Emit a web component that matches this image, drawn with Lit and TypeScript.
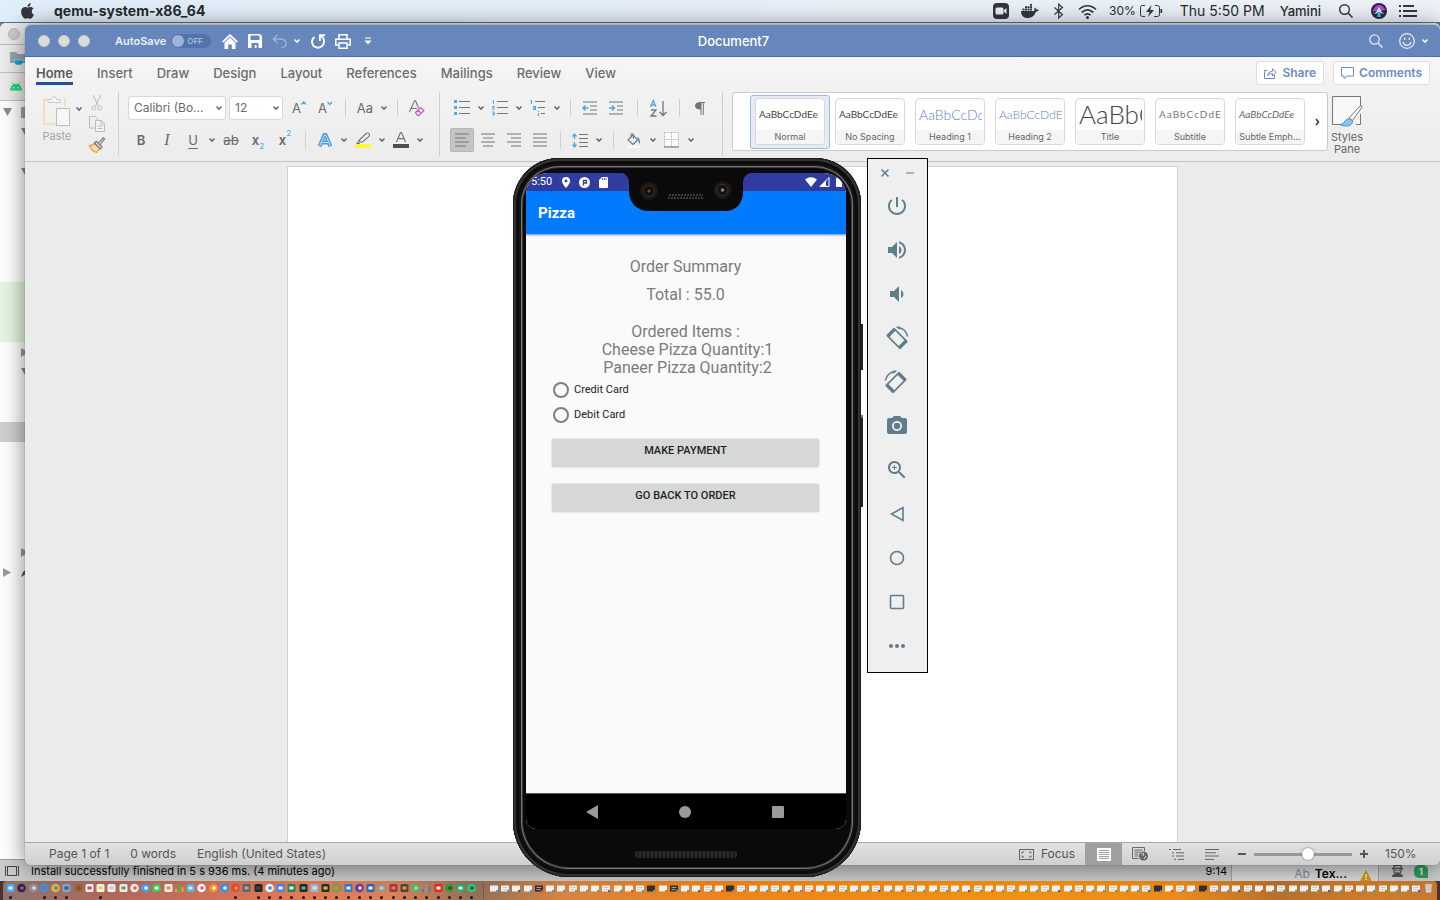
import { LitElement, html, css, svg } from "lit";
import { customElement } from "lit/decorators.js";
import { classMap } from "lit/directives/class-map.js";

const base = css`
  :host, * { box-sizing: border-box; }
  button, select, input { font: inherit; color: inherit; margin: 0; }
  button { background: none; border: 0; padding: 0; display: inline-flex; align-items: center; justify-content: center; }
  svg { display: block; flex: none; overflow: visible; }
`;

const icon = (w: number, h: number, body: unknown, vb = `0 0 ${w} ${h}`) =>
  html`<svg width=${w} height=${h} viewBox=${vb} fill="none" aria-hidden="true">${body}</svg>`;

const chev = (c = "#6a6a6a") =>
  icon(8, 6, svg`<path d="M1.5 1.5 4 4 6.5 1.5" stroke=${c} stroke-width="1.6"/>`);

/* ------------------------------------------------------------------ */
@customElement("mac-menubar")
class MacMenubar extends LitElement {
  static styles = [base, css`
    :host { display: flex; align-items: center; height: 23px; padding: 0 23px 0 21px; gap: 12px;
      background: linear-gradient(90deg, #e0eef9, #e8f0f8 60%, #eef2f8); border-bottom: 1px solid #55708e;
      font: 500 14px/22px Inter, sans-serif; color: #262a30; }
    .app { font-weight: 700; font-size: 14px; margin-left: 8px; }
    .fill { flex: 1; }
    .near { margin-right: 3px; }
    .roomy { margin-right: 6px; }
    .small { font-size: 12px; font-weight: 400; }
    .battery { display: flex; align-items: center; gap: 4px; margin-right: 5px; }
    .name { font-weight: 500; font-size: 13px; }
    .date { font-weight: 400; font-size: 14px; }
  `];
  render() {
    return html`
      ${icon(13, 16, svg`<path fill="#33373d" d="M12.152 6.896c-.948 0-2.415-1.078-3.96-1.04-2.04.027-3.91 1.183-4.961 3.014-2.117 3.675-.546 9.103 1.519 12.09 1.013 1.454 2.208 3.09 3.792 3.039 1.52-.065 2.09-.987 3.935-.987 1.831 0 2.35.987 3.96.948 1.637-.026 2.676-1.48 3.676-2.948 1.156-1.688 1.636-3.325 1.662-3.415-.039-.013-3.182-1.221-3.22-4.857-.026-3.04 2.48-4.494 2.597-4.559-1.429-2.09-3.623-2.324-4.39-2.376-2-.156-3.675 1.09-4.61 1.09zM15.53 3.83c.843-1.012 1.4-2.427 1.245-3.83-1.207.052-2.662.805-3.532 1.818-.78.896-1.454 2.338-1.273 3.714 1.338.104 2.715-.688 3.559-1.701"/>`, "2 0 20 24")}
      <span class="app">qemu-system-x86_64</span>
      <span class="fill"></span>
      ${icon(16, 16, svg`<rect width="16" height="16" rx="4" fill="#33373d"/><rect x="2.500" y="4.500" width="8" height="7" rx="1.500" fill="#e8f0f8"/><path d="M11 7.200 13.500 5v6L11 8.800z" fill="#e8f0f8"/>`)}
      <span class="near">${icon(18, 14, svg`<path fill="#33373d" d="M0 7h12.800c.8-.4 1-1.600.5-2.700l.8-.8c.8.5 1.200 1.200 1.200 2 .9-.1 1.800 0 2.500.5-.5 1-1.500 1.500-2.800 1.500C13.500 12 10.500 14 6.500 14 2.500 14 0 11.500 0 7zM1.500 4.500h2v2h-2zM4 4.500h2v2H4zM6.500 4.500h2v2h-2zM9 4.500h2v2H9zM4 2.200h2v1.800H4zM6.500 2.200h2v1.800h-2zM9 2.200h2v1.800H9zM9 0h2v1.700H9z"/>`)}</span>
      <span class="near">${icon(9, 16, svg`<path d="M.5 4.500 8.500 11.500 4.700 15V1l3.800 3.500-8 7" stroke="#33373d" stroke-width="1.200"/>`)}</span>
      ${icon(19, 15, svg`<path d="M1 5.500c5-5 12-5 17 0M3.700 8.500c3.600-3.300 8-3.300 11.600 0M6.400 11.200c2-1.800 4.200-1.800 6.200 0" stroke="#33373d" stroke-width="1.700"/><circle cx="9.500" cy="13.500" r="1.500" fill="#33373d"/>`)}
      <span class="battery"><span class="small">30%</span>
      ${icon(23, 12, svg`<path d="M5 .5H2.500Q.5.5.5 2.500v7q0 2 2 2H5M15 .5h2.500q2 0 2 2v7q0 2-2 2H14" stroke="#33373d"/><path d="M11.500 0 6 7h3.500L8 12l6-7h-3.700z" fill="#33373d"/><path d="M21 4q2 2 0 4z" fill="#33373d" stroke="#33373d"/>`)}</span>
      <span class="date near">Thu 5:50 PM</span>
      <span class="name roomy">Yamini</span>
      <span class="roomy">${icon(14, 14, svg`<circle cx="5.500" cy="5.500" r="4.800" stroke="#33373d" stroke-width="1.400"/><path d="m9 9 4.500 4.500" stroke="#33373d" stroke-width="1.600"/>`)}</span>
      ${icon(16, 16, svg`<circle cx="8" cy="8" r="8" fill="#2b2540"/><path d="M1.500 9C3 3 6 2 8 2c3 0 5 2 6.500 5-3 0-4 1-6.500 2-2-1-4-1-6.500 0z" fill="#b04bd0"/><path d="M2.500 11C5 10 6 8 8 4c2 4 3 6 5.500 7-2 0-3-1-5.500-2-2 1-3.500 2-5.500 2z" fill="#d8f4ff"/><path d="M6 14c0-3 1-5 2-6 1 1 2 3 2 6z" fill="#39b6e8"/>`)}
      ${icon(18, 12, svg`<path d="M0 1h2M0 6h2M0 11h2M4 1h11M4 6h14M4 11h14" stroke="#33373d" stroke-width="2"/>`)}
    `;
  }
}

/* ------------------------------------------------------------------ */
type TreeRow = { arrow?: "down" | "right"; depth?: number; tint?: string; glyph?: string };
const treeRows: TreeRow[] = Array.from({ length: 37 }, (_, i): TreeRow => {
  const marks: Record<number, TreeRow> = {
    0: { arrow: "down", depth: 0, glyph: "folder" }, 1: { arrow: "down", depth: 1 }, 3: { arrow: "down", depth: 1 },
    9: { tint: "green" }, 10: { tint: "green" }, 11: { tint: "green" },
    12: { arrow: "right", depth: 1 }, 13: { arrow: "down", depth: 1 }, 16: { tint: "gray" },
    22: { arrow: "right", depth: 1 }, 23: { arrow: "right", depth: 0, glyph: "pen" },
  };
  return marks[i] ?? {};
});

@customElement("studio-window")
class StudioWindow extends LitElement {
  static styles = [base, css`
    :host { display: flex; flex-direction: column; background: #fff; border-radius: 6px 6px 0 0; overflow: hidden;
      font: 400 11px/16px Inter, sans-serif; color: #000; }
    .title { height: 22px; background: #ececec; border-bottom: 1px solid #bbb; display: flex; align-items: center; padding-left: 8px; }
    .dot { width: 12px; height: 12px; border-radius: 50%; background: #cdcdcd; border: 1px solid #b9b9b9; }
    .bar { height: 28px; background: #ececec; border-bottom: 1px solid #c0c0c0; display: flex; align-items: center; padding-left: 10px; }
    .tree { flex: 1; min-height: 0; overflow: hidden; padding-top: 1px; }
    .row { height: 20px; display: flex; align-items: center; padding-left: 3px; gap: 9px; }
    .deep { padding-left: 21px; }
    .green { background: #e7f6e1; }
    .gray { background: #d0d0d0; }
    .status { height: 22px; flex: none; border-top: 1px solid #a0a0a0; background: #cccccc; display: flex; align-items: center; padding: 1px 12px 0 5px; gap: 12px; }
    .msg { flex: 1; }
    .panel { align-self: stretch; width: 148px; border: 1px solid #a5a5a5; border-top: 0; border-bottom: 0; background: #dcdcdc;
      display: flex; align-items: flex-end; justify-content: flex-end; padding-right: 6px; gap: 5px; font-size: 12px; line-height: 14px; overflow: hidden; margin: -1px 0 0 -8px; }
    .ab { color: #7f8c99; }
    .tex { font-weight: 600; margin-right: 8px; }
    .badge { width: 14px; height: 13px; border-radius: 5px 5px 0 5px; background: #2f9e5b; color: #fff; font-weight: 600; font-size: 9px; line-height: 13px; text-align: center; }
    .end { display: flex; align-items: center; gap: 10px; }
  `];
  render() {
    return html`
      <div class="title"><span class="dot"></span></div>
      <div class="bar">${icon(16, 15, svg`<path d="M0 1h6l2 2h8v9H0z" fill="#98a6b0"/><path d="M4 9h9v1h3v2h-3q-1 2-3 2H7q-3 0-3-5z" fill="#12a8d8" stroke="#ececec" stroke-width=".5"/>`)}</div>
      <div class="bar">${icon(12, 9, svg`<path d="M0 8.500Q.5 4 3 2.600L1.800.6l.7-.4L3.700 2.200q2.300-.8 4.600 0L9.500.2l.7.4L9 2.600Q11.500 4 12 8.500z" fill="#1ed582"/><circle cx="3.500" cy="5.700" r=".7" fill="#fff"/><circle cx="8.500" cy="5.700" r=".7" fill="#fff"/>`)}</div>
      <div class="tree">
        ${treeRows.map((r) => html`<div class=${classMap({ row: true, deep: r.depth === 1, green: r.tint === "green", gray: r.tint === "gray" })}>
          ${r.arrow === "down" ? icon(9, 8, svg`<path d="M0 0h9L4.500 8z" fill="#8c8c8c"/>`) : ""}
          ${r.arrow === "right" ? icon(8, 9, svg`<path d="M0 0v9L8 4.500z" fill="#9a9a9a"/>`) : ""}
          ${r.glyph === "folder" ? icon(12, 11, svg`<path d="M0 0h12v11H0z" fill="#98a6b0"/>`) : ""}
          ${r.glyph === "pen" ? icon(12, 10, svg`<path d="M1 10 3 5l6-5 3 3V7H6z" fill="#555"/>`) : ""}
        </div>`)}
      </div>
      <div class="status">
        ${icon(14, 10, svg`<path d="M.5 0v10M13.500 0v10" stroke="#444"/><rect x="2.500" y=".5" width="9" height="9" stroke="#444"/>`)}
        <span class="msg">Install successfully finished in 5 s 936 ms. (4 minutes ago)</span>
        <span>9:14</span>
        <span class="panel"><span class="ab">Ab</span><span class="tex">Tex...</span>${icon(12, 11, svg`<path d="M6 0 12 11H0z" fill="#d99a1c"/><path d="M6 4v4M6 9v1" stroke="#fff" stroke-width="1.300"/>`)}</span>
        <span class="end">${icon(13, 12, svg`<path d="M1 3.500h11M3 3V.5h7V3M3 4v3q3.500 3.500 7 0V4" stroke="#555" stroke-width="1.300"/><path d="M1 12q0-3 3-3.300h5q3 .3 3 3.300z" fill="#555"/><path d="M4.500 5.500H6M7.500 5.500H9M5.500 7.300h2" stroke="#555"/>`)}
        <span class="badge">1</span></span>
      </div>`;
  }
}

/* ------------------------------------------------------------------ */
const g = "#757575";
const b = "#4aabdf";
const lines = (rows: number[][]) => rows.map(([x1, x2, y]) => svg`<path d=${`M${x1} ${y}H${x2}`} stroke=${g} stroke-width="1.200"/>`);

const styleCards = [
  ["Normal", "plain"], ["No Spacing", "plain"], ["Heading 1", "h1"], ["Heading 2", "h2"],
  ["Title", "big"], ["Subtitle", "track"], ["Subtle Emph...", "it"],
];

@customElement("word-window")
class WordWindow extends LitElement {
  static styles = [base, css`
    :host { display: flex; flex-direction: column; border-radius: 6px; overflow: hidden; background: #ebebeb;
      font: 400 12px/16px Inter, sans-serif; color: #6a6a6a; box-shadow: 0 2px 24px rgba(0,0,0,.5), 0 0 1px rgba(0,0,0,.6); }
    .titlebar { height: 32px; flex: none; background: #6786bb; border-bottom: 1px solid #4c6eab; color: #fff;
      display: grid; grid-template-columns: 1fr auto 1fr; align-items: center; padding: 1px 11px 0 13px; }
    .left { display: flex; align-items: center; }
    .lights { display: flex; gap: 8px; margin-right: 25px; }
    .light { width: 12px; height: 12px; border-radius: 50%; background: #dcdcdc; border: 1px solid #c9c9c9; }
    .autosave { display: flex; align-items: center; gap: 5px; font-size: 11px; font-weight: 600; color: #e9eefa; margin-right: 11px; }
    .switch { display: grid; align-items: center; }
    .switch input { appearance: none; grid-area: 1 / 1; width: 40px; height: 14px; border-radius: 7px; background: #5374ab; }
    .switch input::before { content: ""; display: block; width: 12px; height: 12px; margin: 1px; border-radius: 50%; background: #9fb3da; }
    .off { grid-area: 1 / 1; padding-left: 16px; font-size: 8px; line-height: 14px; color: #a9bbdd; z-index: 1; }
    .quick, .undo { display: flex; align-items: center; gap: 10px; }
    .undo { gap: 6px; }
    .doc { font-size: 13px; font-weight: 500; }
    .right { display: flex; align-items: center; justify-content: flex-end; gap: 16px; }
    .face { display: flex; align-items: center; gap: 6px; }

    .tabs { flex: none; height: 31px; background: linear-gradient(#f6f6f6, #f2f2f2); display: flex; align-items: flex-start; padding: 4px 10px 0 11px; }
    .tablist { display: flex; gap: 24px; padding-top: 4px; flex: 1; }
    .tab { font-size: 13px; font-weight: 500; line-height: 16px; padding-bottom: 1px; border-bottom: 3px solid transparent; color: #6c6c6c; }
    .tab.on { font-weight: 600; color: #5a5a5a; border-bottom-color: #2350a0; }
    .pills { display: flex; gap: 9px; }
    .pill { height: 24px; background: #fff; border: 1px solid #dedede; border-radius: 3px; color: #6b8ac4; font-weight: 600; font-size: 12px; padding: 0 7px; gap: 5px; }

    .ribbon { flex: none; background: linear-gradient(#f2f2f2, #ececec); border-bottom: 1px solid #c2c2c2; display: flex; padding: 4px 0 5px 16px; }
    .rule { width: 1px; background: #cfcfcf; margin: 0 9px; flex: none; }
    .group { display: flex; flex-direction: column; flex: none; }
    .line { display: flex; align-items: center; height: 32px; }
    .cell { width: 26px; height: 24px; flex: none; }
    .wide { width: 28px; }
    .arrow { width: 12px; height: 24px; flex: none; }
    .bar { height: 18px; flex: none; width: 14px; display: flex; justify-content: center; }
    .bar.b16 { width: 16px; }
    .bar::before { content: ""; width: 1px; background: #cfcfcf; }
    .pressed { background: #c4c4c4; border: 1px solid #b4b4b4; border-radius: 2px; width: 24px; margin: 0 1px; }
    .clip { display: flex; }
    .paste { flex-direction: column; width: 32px; gap: 2px; color: #a5a5a5; font-size: 11px; line-height: 14px; justify-content: flex-start; padding-top: 4px; }
    .stack { display: flex; flex-direction: column; }
    .stack .cell { height: 21px; width: 24px; }
    .clip .arrow { height: 34px; }
    .combo { display: grid; align-items: center; margin-right: 3px; }
    .combo select { appearance: none; grid-area: 1 / 1; width: 98px; height: 24px; background: #fff; border: 1px solid #d8d8d8; border-radius: 3px; padding: 0 0 0 5px; font-size: 12px; }
    .combo.size select { width: 54px; }
    .combo svg { grid-area: 1 / 1; justify-self: end; margin-right: 3px; pointer-events: none; }
    .ltr { font-size: 13px; line-height: 18px; }
    .sub { font-size: 8px; color: #4aabdf; align-self: flex-end; line-height: 10px; padding-bottom: 1px; }
    .sup { font-size: 8px; color: #4aabdf; align-self: flex-start; line-height: 10px; }
    .bold { font-weight: 600; }
    .ital { font-style: italic; font-family: "Liberation Serif", serif; font-size: 16px; }
    .under { text-decoration: underline; text-underline-offset: 3px; }
    .strike { text-decoration: line-through; font-size: 13px; }

    .gallery { display: flex; align-items: center; height: 59px; background: #fff; border: 1px solid #cbcbcb; border-radius: 3px; padding: 0 3px 0 17px; flex: none; }
    .swatch { width: 80px; height: 54px; border: 1px solid transparent; border-radius: 3px; flex: none; }
    .swatch.on { background: #e6ecf7; border-color: #9db7e2; }
    .card { width: 70px; height: 47px; border: 1px solid #d8d8d8; border-radius: 4px; background: #fff; overflow: hidden; display: flex; flex-direction: column; }
    .sample { height: 31px; line-height: 31px; margin: 0 2px; overflow: hidden; white-space: nowrap; text-align: left; font-family: Lato, sans-serif; font-size: 10px; color: #444; padding-left: 1px; }
    .caption { height: 14px; line-height: 14px; font-size: 9px; background: #f5f5f5; color: #666; white-space: nowrap; }
    .h1, .h2 { font-weight: 300; color: #5f82c6; }
    .h1 { font-size: 14px; }
    .h2 { font-size: 12px; }
    .big { font-size: 26px; font-weight: 300; }
    .track { letter-spacing: 1px; color: #777; }
    .it { font-style: italic; color: #666; }
    .next { width: 14px; height: 40px; }
    .pane { flex-direction: column; width: 38px; font-size: 11px; line-height: 12px; gap: 4px; color: #666; justify-content: flex-start; padding-top: 4px; }

    .canvas { flex: 1; min-height: 0; display: flex; justify-content: center; padding-top: 4px; overflow: hidden; }
    .page { width: 63%; max-width: 892px; min-width: 320px; background: #fff; border: 1px solid #d0d0d0; border-bottom: 0; }

    .status { height: 23px; flex: none; border-top: 1px solid #a8a8a8; background: linear-gradient(#e2e2e2, #cfcfcf); display: flex; align-items: center; padding: 0 24px; color: #555; font-size: 12px; }
    .counts { display: flex; gap: 21px; flex: 1; }
    .focus { gap: 7px; margin-right: 10px; }
    .view { width: 36px; height: 22px; }
    .view.on { width: 37px; background: #a0a0a0; }
    .zoom { display: flex; align-items: center; gap: 8px; margin-left: 8px; }
    .zoom input { appearance: none; width: 98px; height: 14px; background: linear-gradient(#999, #999) center / 100% 3px no-repeat; }
    .zoom input::-webkit-slider-thumb { appearance: none; width: 12px; height: 12px; border-radius: 50%; background: #fff; box-shadow: 0 0 2px rgba(0,0,0,.6); }
    .pct { margin-left: 17px; width: 31px; white-space: nowrap; }
  `];

  private arrow = (label: string) => html`<button class="arrow" aria-label=${label}>${chev()}</button>`;

  render() {
    const w = "#fff";
    return html`
      <header class="titlebar">
        <div class="left">
          <div class="lights"><span class="light"></span><span class="light"></span><span class="light"></span></div>
          <label class="autosave">AutoSave<span class="switch"><input type="checkbox" role="switch"/><span class="off">OFF</span></span></label>
          <div class="quick">
            <button aria-label="Home">${icon(16, 15, svg`<path d="M.7 8 8 1.200 15.300 8" stroke=${w} stroke-width="1.800"/><path d="M2.500 8.700 8 3.600l5.500 5.100V15H9.800v-4.500H6.200V15H2.500z" fill=${w}/>`)}</button>
            <button aria-label="Save">${icon(14, 14, svg`<path d="M0 0h12l2 2v12H0z" fill=${w}/><path d="M2.500 1.500h9V6h-9zM3.500 9h7v5h-2v-3H6.800v3H3.500z" fill="#6786bb"/>`)}</button>
            <span class="undo"><button aria-label="Undo">${icon(15, 14, svg`<path d="M5.500 1 1.200 5l4.300 4M1.500 5H9q5 .5 5 4.500T9.500 13.300" stroke="#9fb3d8" stroke-width="1.500"/>`)}</button>
            <button aria-label="Undo history">${chev(w)}</button></span>
            <button aria-label="Redo">${icon(14, 15, svg`<path d="M8.500 1.300H14M8.900.500v6.500M9.300 1.500q4.200 2.300 3.700 6.700-.9 5.200-6 5.500-5.300-.2-6-5.500-.1-3.200 2.500-5.200" stroke=${w} stroke-width="1.900"/>`)}</button>
            <button aria-label="Print">${icon(16, 15, svg`<path d="M4 5V.8h8V5M3.500 11H.8V5.200h14.400V11h-2.700" stroke=${w} stroke-width="1.500"/><path d="M4 9h8v5.200H4z" stroke=${w} stroke-width="1.500"/>`)}</button>
            <button aria-label="Customise toolbar">${icon(14, 8, svg`<path d="M4 1h6" stroke=${w} stroke-width="1.200"/><path d="M3.500 3.500h7L7 7.500z" fill=${w}/>`)}</button>
          </div>
        </div>
        <div class="doc">Document7</div>
        <div class="right">
          <button aria-label="Search">${icon(14, 14, svg`<circle cx="5.500" cy="5.500" r="4.700" stroke="#e4eaf6" stroke-width="1.300"/><path d="m9 9 4.500 4.500" stroke="#e4eaf6" stroke-width="1.500"/>`)}</button>
          <span class="face"><button aria-label="Feedback">${icon(16, 16, svg`<circle cx="8" cy="8" r="7.300" stroke="#e4eaf6" stroke-width="1.300"/><path d="M5.700 4.500v2.500M10.300 4.500v2.500" stroke="#e4eaf6" stroke-width="1.300"/><path d="M4 9q1 3.300 4 3.300T12 9" stroke="#e4eaf6" stroke-width="1.200"/>`)}</button>${chev(w)}</span>
        </div>
      </header>

      <div class="tabs">
        <nav class="tablist">
          ${["Home", "Insert", "Draw", "Design", "Layout", "References", "Mailings", "Review", "View"].map((t, i) =>
            html`<button class=${classMap({ tab: true, on: i === 0 })}>${t}</button>`)}
        </nav>
        <div class="pills">
          <button class="pill">${icon(13, 12, svg`<path d="M3.500 3.500h-3v8h10V8M3.500 8.500Q4 4.500 8.500 4.200V1.800L12.300 5.500 8.500 9V6.700Q5.500 6.500 3.500 8.500z" stroke="#6b8ac4"/>`)}Share</button>
          <button class="pill">${icon(13, 12, svg`<path d="M.5.5h12v8.500H6l-3 2.500V9H.5z" stroke="#6b8ac4"/>`)}Comments</button>
        </div>
      </div>

      <div class="ribbon">
        <div class="clip">
          <button class="paste">${icon(28, 31, svg`<path d="M7 3.500H.8V28.200H13M21 3.500h1v7" stroke="#f3d9b4" stroke-width="1.600"/><path d="M5 6.500V3.500h3.500Q9 .5 11 .5t2.500 3H17v3z" fill="#f6f6f6" stroke="#c9c9c9"/><path d="M13.500 12.500h13V29.500h-13z" fill="#f6f6f6" stroke="#bdbdbd"/>`)}Paste</button>
          ${this.arrow("Paste options")}
          <div class="stack">
            <button class="cell" aria-label="Cut">${icon(12, 16, svg`<path d="m2 0 5.500 11M10 0 4.500 11" stroke="#bcbcbc"/><circle cx="3" cy="13" r="2" stroke="#a9cde2"/><circle cx="9" cy="13" r="2" stroke="#a9cde2"/>`)}</button>
            <button class="cell" aria-label="Copy">${icon(16, 16, svg`<path d="M.5.500h6l2 2V12h-8z" stroke="#bcbcbc"/><path d="M6.500 4.500h6l3 3v8h-9zM12 4.500V8h3.500M8.500 10h5M8.500 12.500h5" fill="#f2f2f2" stroke="#bcbcbc"/>`)}</button>
            <button class="cell" aria-label="Format painter">${icon(16, 16, svg`<path d="M.5 8.500q3 .3 5-2l5.500 5.500q-2 1-3.500 3.500Q2.500 14 .5 8.500z" fill="#fbd9a8" stroke="#e9a34b" stroke-width="1.300"/><path d="M5.500 6 7.200 4.300l5.800 5.800-1.700 1.700zM9 6.300 14.300.8l1.200 1.200L10.800 8" stroke=${g} fill="#eee" stroke-width="1.200"/>`)}</button>
          </div>
        </div>
        <span class="rule"></span>
        <div class="group">
          <div class="line">
            <span class="combo"><select aria-label="Font"><option>Calibri (Bo...</option></select>${chev()}</span>
            <span class="combo size"><select aria-label="Font size"><option>12</option></select>${chev()}</span>
            <button class="cell" aria-label="Grow font"><span class="ltr">A</span>${icon(5, 12, svg`<path d="M.5 2.500 2.700 0 5 2.500" stroke=${b} stroke-width="1.300"/>`)}</button>
            <button class="cell" aria-label="Shrink font"><span class="ltr">A</span>${icon(5, 12, svg`<path d="M.5 0 2.700 2.500 5 0" stroke=${b} stroke-width="1.300"/>`)}</button>
            <span class="bar"></span>
            <button class="cell" aria-label="Change case"><span class="ltr">Aa</span></button>${this.arrow("Case options")}
            <span class="bar"></span>
            <button class="cell" aria-label="Clear formatting">${icon(16, 16, svg`<path d="M.5 12 5.500.8h1l3 7M2.300 8.500H8" stroke=${g} stroke-width="1.100"/><path d="m6.500 12.500 5-5 3.500 3-5 5H8.500zM8.800 10.300l3.400 3" stroke="#c45ac4" stroke-width="1.200" fill="#f6e3f6"/>`)}</button>
          </div>
          <div class="line">
            <button class="cell" aria-label="Bold"><span class="ltr bold">B</span></button>
            <button class="cell" aria-label="Italic"><span class="ital">I</span></button>
            <button class="cell" aria-label="Underline"><span class="ltr under">U</span></button>${this.arrow("Underline options")}
            <button class="cell" aria-label="Strikethrough"><span class="strike">ab</span></button>
            <button class="cell wide" aria-label="Subscript"><span class="ltr bold">x</span><span class="sub">2</span></button>
            <button class="cell" aria-label="Superscript"><span class="ltr bold">x</span><span class="sup">2</span></button>
            <span class="bar"></span>
            <button class="cell" aria-label="Text effects">${icon(14, 15, svg`<path d="M1.500 13.500 6.300 2h1.400l4.800 11.500M3.800 9.500h6.500" stroke="#4d9ede" stroke-width="3.800"/><path d="M1.500 13.500 6.300 2h1.400l4.800 11.500M3.800 9.500h6.500" stroke="#e6f2fc" stroke-width=".8"/>`)}</button>${this.arrow("Effects options")}
            <button class="cell" aria-label="Highlight">${icon(16, 16, svg`<path d="M0 12h16v4H0z" fill="#fdf636"/><path d="M4 8.500 11 1.500q2-1 3 .2T14 4.500L7.500 10H5zM4 8.500 2 11.500h3" stroke=${g} stroke-width="1.100"/>`)}</button>${this.arrow("Highlight options")}
            <button class="cell" aria-label="Font colour">${icon(16, 16, svg`<path d="M0 12h16v4H0z" fill="#4f4f4f"/><path d="M3.500 10 7.500.5h1l4 9.500M5 6.700h6" stroke=${g} stroke-width="1.200"/>`)}</button>${this.arrow("Colour options")}
          </div>
        </div>
        <span class="rule"></span>
        <div class="group">
          <div class="line">
            <button class="cell" aria-label="Bullets">${icon(16, 16, svg`<path d="M0 0h3v3H0zM0 6h3v3H0zM0 12h3v3H0z" fill=${b}/>${lines([[5, 16, 1.5], [5, 16, 7.5], [5, 16, 13.5]])}`)}</button>${this.arrow("Bullet options")}
            <button class="cell" aria-label="Numbering">${icon(16, 16, svg`<path d="M.5.800h1V4M.2 6.500h2v1.300H.7v1.400h1.800M.2 12h2v3H.2M.7 13.500h1.500" stroke=${b}/>${lines([[5, 16, 1.5], [5, 16, 7.5], [5, 16, 13.5]])}`)}</button>${this.arrow("Numbering options")}
            <button class="cell" aria-label="Multilevel list">${icon(16, 16, svg`<path d="M.5.800h1V4M3 6.500h2.500V9.500H3.500V8h2M8.500 11v1M8.500 13v3" stroke=${b} stroke-width="1.200"/>${lines([[5, 15, 1.5], [8, 15, 7.5], [11, 15, 13.5]])}`)}</button>${this.arrow("Multilevel options")}
            <span class="bar"></span>
            <button class="cell" aria-label="Decrease indent">${icon(16, 14, svg`<path d="M6.500 7H1M3.500 4.500 1 7l2.500 2.500" stroke=${b} stroke-width="1.500"/>${lines([[1, 15, 1], [8, 15, 5], [8, 15, 9], [1, 15, 13]])}`)}</button>
            <button class="cell" aria-label="Increase indent">${icon(16, 14, svg`<path d="M1 7h5.500M4 4.500 6.500 7 4 9.500" stroke=${b} stroke-width="1.500"/>${lines([[1, 15, 1], [9, 15, 5], [9, 15, 9], [1, 15, 13]])}`)}</button>
            <span class="bar b16"></span>
            <button class="cell" aria-label="Sort">${icon(17, 17, svg`<path d="M.5 7 3.300.5 6 7M1.500 5h3.700" stroke=${b} stroke-width="1.300"/><path d="M1 10h5L1 16h5.500M13 1v14M9.500 12l3.500 3.500 3.500-3.500" stroke=${g} stroke-width="1.300"/>`)}</button>
            <span class="bar b16"></span>
            <button class="cell" aria-label="Show marks">${icon(10, 13, svg`<path d="M5.500 0H10v1H8.800v12h-1V1H6.500v12h-1V7.500Q0 7.500 0 3.800T5.500 0z" fill=${g}/>`)}</button>
          </div>
          <div class="line">
            <button class="cell pressed" aria-label="Align left">${icon(16, 14, lines([[1, 15, 1], [1, 12, 5], [1, 15, 9], [1, 12, 13]]))}</button>
            <button class="cell" aria-label="Align centre">${icon(16, 14, lines([[1, 15, 1], [3, 13, 5], [1, 15, 9], [3, 13, 13]]))}</button>
            <button class="cell" aria-label="Align right">${icon(16, 14, lines([[1, 15, 1], [5, 15, 5], [1, 15, 9], [5, 15, 13]]))}</button>
            <button class="cell" aria-label="Justify">${icon(16, 14, lines([[1, 15, 1], [1, 15, 5], [1, 15, 9], [1, 15, 13]]))}</button>
            <span class="bar"></span>
            <button class="cell" aria-label="Line spacing">${icon(16, 15, svg`<path d="M2.500 1v5M.5 3.500l2-2.500 2 2.500M2.500 9v5M.5 11.500l2 2.500 2-2.500" stroke=${b} stroke-width="1.300"/>${lines([[7, 16, 1.5], [7, 16, 5.5], [7, 16, 9.5], [7, 16, 13.5]])}`)}</button>${this.arrow("Spacing options")}
            <span class="bar b16"></span>
            <button class="cell" aria-label="Shading">${icon(14, 15, svg`<path d="m1 7 5-5 4.500 5L6 11.500zM4 4V1.500Q5 0 6.500 1.500V6" stroke=${g} stroke-width="1.100"/><path d="M9.500 4q4 0 3.500 7-2.500-2-2-4.500z" fill="#4d94cf"/><path d="M0 12.500h14V15H0z" fill="#fafafa"/>`)}</button>${this.arrow("Shading options")}
            <button class="cell" aria-label="Borders">${icon(16, 16, svg`<path d="M.5.5h14v14H.5zM7.500.5v14M.5 7.500h14" fill="#fbfbfb" stroke="#bdbdbd" stroke-dasharray="2 1"/><path d="M0 15h15" stroke=${g} stroke-width="1.200"/>`)}</button>${this.arrow("Border options")}
          </div>
        </div>
        <span class="rule"></span>
        <div class="gallery">
          ${styleCards.map(([name, cls], i) => html`<button class=${classMap({ swatch: true, on: i === 0 })}>
            <span class="card"><span class=${"sample " + cls}>AaBbCcDdEe</span><span class="caption">${name}</span></span></button>`)}
          <button class="next" aria-label="More styles">${icon(5, 8, svg`<path d="m1 1 2.500 3L1 7" stroke="#333" stroke-width="1.500"/>`)}</button>
        </div>
        <button class="pane">${icon(31, 31, svg`<path d="M24 28.500h4.500V18M28.500 14V.5H.5v28H8" stroke="#777" fill="#f8f8f8"/><path d="m17 22 11-12q2-.7 2 1.200L20 25z" fill="#fff" stroke="#777"/><path d="M8 28.500q4 0 5-3.500 2-3 6-2l1.500 2q0 5-6.500 5-4 0-6-1.500z" fill="#8cc4ee" stroke="#4d94cf"/>`)}<span>Styles Pane</span></button>
      </div>

      <main class="canvas"><div class="page"></div></main>

      <footer class="status">
        <div class="counts"><span>Page 1 of 1</span><span>0 words</span><span>English (United States)</span></div>
        <button class="focus">${icon(15, 11, svg`<rect x=".5" y=".5" width="14" height="10" stroke="#666"/><path d="M3 4.500V3h2M10 3h2v1.500M12 6.500V8h-2M5 8H3V6.500" stroke="#666"/>`)}Focus</button>
        <button class="view on" aria-label="Print layout">${icon(14, 13, svg`<path d="M0 0h14v13H0z" fill="#fff"/><path d="M2 2.500h10M2 4.500h10M2 6.500h10M2 8.500h10M2 10.500h10" stroke="#a0a0a0"/>`)}</button>
        <button class="view" aria-label="Web layout">${icon(16, 14, svg`<path d="M6.500 11.500H.5V.5h12V4M2.500 3h8M2.500 5h6M2.500 7h4M2.500 9h4" stroke="#666"/><circle cx="11.500" cy="9" r="4.500" fill="#666"/><path d="M9 7q2-1 3 0l-1 2M12 12l2-3" stroke="#ddd"/>`)}</button>
        <button class="view" aria-label="Outline">${icon(15, 11, svg`<path d="M0 .5h2M4 .5h8M3 3.800h2M7 3.800h8M3 7h2M7 7h8M5 10.400h2M9 10.400h6" stroke="#666"/>`)}</button>
        <button class="view" aria-label="Draft">${icon(14, 11, svg`<path d="M0 .5h14M0 3.800h11M0 7h14M0 10.400h9" stroke="#666"/>`)}</button>
        <div class="zoom">
          <button aria-label="Zoom out">${icon(8, 8, svg`<path d="M0 4h8" stroke="#555" stroke-width="2"/>`)}</button>
          <input type="range" min="0" max="100" value="56" aria-label="Zoom"/>
          <button aria-label="Zoom in">${icon(8, 8, svg`<path d="M0 4h8M4 0v8" stroke="#555" stroke-width="2"/>`)}</button>
        </div>
        <span class="pct">150%</span>
      </footer>`;
  }
}

/* ------------------------------------------------------------------ */
@customElement("phone-frame")
class PhoneFrame extends LitElement {
  static styles = [base, css`
    :host { display: block; font-family: Roboto, sans-serif; color: #7b7b7b; }
    .body { position: relative; width: 348px; padding: 15px 15px 0 13px; border-radius: 46px 46px 56px 56px;
      background: #0a0a0a; box-shadow: inset 0 0 0 1px #1c1c1c, inset 0 0 0 3px #333, inset 0 0 0 6px #0c0c0c, inset 0 0 0 8px #161616, inset 0 0 0 9px #777, inset 0 0 0 10px #3a3a3a; }
    .key { position: absolute; left: 348px; width: 2px; background: #222; }
    .power { top: 166px; height: 46px; }
    .volume { top: 257px; height: 92px; border-top: 3px solid #777; }
    .screen { border-radius: 22px 22px 10px 10px; overflow: hidden; background: #fafafa; height: 656px; display: flex; flex-direction: column; }
    .sys { height: 18px; flex: none; background: #303c9f; display: flex; align-items: center; padding: 0 3px 0 5px; gap: 9px; color: #fff; font-size: 11px; line-height: 18px; }
    .sys .fill { flex: 1; }
    .clock { margin-right: 1px; }
    .signals { display: flex; gap: 2px; align-items: center; }
    .appbar { height: 43px; flex: none; background: #007aff; color: #fff; font-size: 15px; font-weight: 700; line-height: 45px; padding-left: 12px; box-shadow: 0 1px 2px rgba(0,60,160,.6); z-index: 1; }
    .content { flex: 1; padding: 24px 27px 0 26px; display: flex; flex-direction: column; text-align: center; font-size: 16px; line-height: 18px; }
    .summary, .total { margin: 0; }
    .total { margin-top: 10px; }
    .items { margin-top: 19px; }
    .item { display: block; white-space: pre; }
    .pay { border: 0; margin: 1px 0 12px; padding: 0; display: flex; flex-direction: column; gap: 1px; }
    .opt { display: flex; align-items: center; gap: 5px; height: 24px; font-size: 11px; color: #222; padding-left: 1px; }
    .opt input { appearance: none; width: 16px; height: 16px; border: 2px solid #7f7f7f; border-radius: 50%; }
    .btn { height: 28px; background: #d6d8d7; border-radius: 2px; box-shadow: 0 0 2px rgba(0,0,0,.25); color: #1f1f1f; font-size: 11px; line-height: 14px; font-weight: 500; align-items: flex-start; padding-top: 5px; margin-bottom: 17px; }
    .nav { height: 36px; flex: none; background: #000; display: flex; justify-content: space-between; align-items: center; padding: 0 62px 0 60px; border-top: 1px solid #555; }
    .chin { height: 48px; display: flex; justify-content: center; padding-top: 22px; }
    .grille { width: 102px; height: 7px; border-radius: 3px; background: repeating-linear-gradient(90deg, #2a2a2a 0 2px, #1a1a1a 2px 4px); }
    .notch { position: absolute; left: 102px; top: 14px; z-index: 2; }
  `];
  render() {
    return html`<div class="body">
      <span class="key power"></span><span class="key volume"></span>
      <div class="screen">
        <div class="sys"><span class="clock">5:50</span>
          ${icon(8, 11, svg`<path d="M4 0Q8 0 8 4q0 2.500-4 7Q0 6.500 0 4 0 0 4 0z" fill="#fff"/><circle cx="4" cy="4" r="1.400" fill="#303c9f"/>`)}
          ${icon(11, 11, svg`<circle cx="5.500" cy="5.500" r="5.500" fill="#fff"/><path d="M4.500 3v5.500M4.500 3.500h3v2.500h-3" stroke="#303c9f" stroke-width="1.300"/>`)}
          ${icon(9, 11, svg`<path d="M3 0h5q1 0 1 1v9q0 1-1 1H1q-1 0-1-1V3z" fill="#fff"/><path d="M3.500 1v2M5.300 1v2M7 1v2" stroke="#303c9f" stroke-width=".8"/>`)}
          <span class="fill"></span>
          <span class="signals">
            ${icon(12, 10, svg`<path d="M0 2.500Q6-2 12 2.500L6 10z" fill="#fff"/>`)}
            ${icon(11, 10, svg`<path d="M10 .5V9.500H1z" stroke="#fff"/><path d="M7 3.500V10H.5z" fill="#fff"/>`)}
            ${icon(11, 10, svg`<path d="M5 1V0h3v1h2v9H4V1z" fill="#fff"/>`)}
          </span>
        </div>
        <div class="appbar">Pizza</div>
        <div class="content">
          <p class="summary">Order Summary</p>
          <p class="total">Total : 55.0</p>
          <div class="items"><span class="item">Ordered Items :</span><span class="item"> Cheese Pizza Quantity:1</span><span class="item"> Paneer Pizza Quantity:2</span></div>
          <fieldset class="pay" aria-label="Payment method">
            <label class="opt"><input type="radio" name="pay"/>Credit Card</label>
            <label class="opt"><input type="radio" name="pay"/>Debit Card</label>
          </fieldset>
          <button class="btn">MAKE PAYMENT</button>
          <button class="btn">GO BACK TO ORDER</button>
        </div>
        <div class="nav">
          <button aria-label="Back">${icon(12, 14, svg`<path d="M12 0v14L0 7z" fill="#9a9a9a"/>`)}</button>
          <button aria-label="Home">${icon(12, 12, svg`<circle cx="6" cy="6" r="6" fill="#9a9a9a"/>`)}</button>
          <button aria-label="Overview">${icon(12, 12, svg`<rect width="12" height="12" rx="1" fill="#9a9a9a"/>`)}</button>
        </div>
      </div>
      <div class="chin"><span class="grille"></span></div>
      <div class="notch">${icon(142, 39, svg`
        <path d="M3 0C11 1 14 5 14 11V19C14 32 23 39 34 39H110C121 39 128 32 128 19V11C128 5 131 1 140 0Z" fill="#0a0a0a"/>
        <circle cx="34" cy="19" r="9" fill="#1e1814"/><circle cx="34" cy="19" r="5.500" stroke="#3a302a" fill="#14100e"/><circle cx="34" cy="19" r="1.500" fill="#5a504c"/>
        <circle cx="107.500" cy="18" r="9" fill="#1e1814"/><circle cx="107.500" cy="18" r="5.500" stroke="#3a3430" fill="#14100e"/><circle cx="107.500" cy="18" r="1.800" fill="#8a8480"/>
        <path d="M54 23h34M53 26h36" stroke="#3c3c3c" stroke-width="2" stroke-dasharray="2 1"/>`)}</div>
    </div>`;
  }
}

/* ------------------------------------------------------------------ */
const t = "#607d8b";
const fill24 = (d: string) => icon(24, 24, svg`<path d=${d} fill=${t}/>`);
const rotated = svg`<g transform="translate(12 12.500) rotate(45)"><path fill-rule="evenodd" d="M-8.500-5.800h17q1.500 0 1.500 1.500v8.600q0 1.500-1.500 1.500h-17q-1.500 0-1.500-1.500v-8.600q0-1.500 1.500-1.500zM-6.500-4v8h13v-8z" fill=${t}/></g><path d="M12.500 1.500Q20.500 2 22.700 10.500" stroke=${t} stroke-width="1.500"/><path d="M10.500.7 14.500.5 15.500 4z" fill=${t}/>`;
const tools: [string, unknown][] = [
  ["Power", fill24("M13 3h-2v10h2V3zm4.830 2.170l-1.420 1.420C17.990 7.860 19 9.810 19 12c0 3.870-3.130 7-7 7s-7-3.130-7-7c0-2.190 1.010-4.140 2.580-5.420L6.170 5.170C4.230 6.820 3 9.260 3 12c0 4.970 4.030 9 9 9s9-4.030 9-9c0-2.740-1.230-5.180-3.170-6.830z")],
  ["Volume up", fill24("M3 9v6h4l5 5V4L7 9H3zm13.500 3c0-1.770-1.020-3.290-2.500-4.030v8.050c1.480-.73 2.500-2.250 2.500-4.020zM14 3.230v2.060c2.890.86 5 3.540 5 6.710s-2.110 5.850-5 6.710v2.060c4.010-.91 7-4.490 7-8.770s-2.990-7.860-7-8.770z")],
  ["Volume down", fill24("M18.500 12c0-1.770-1.020-3.290-2.500-4.030v8.050c1.480-.73 2.500-2.250 2.500-4.020zM5 9v6h4l5 5V4L9 9H5z")],
  ["Rotate left", icon(24, 24, rotated)],
  ["Rotate right", icon(24, 24, svg`<g transform="matrix(-1 0 0 1 23 0)">${rotated}</g>`)],
  ["Screenshot", icon(24, 24, svg`<circle cx="12" cy="12" r="3.200" fill=${t}/><path d="M9 2L7.170 4H4c-1.100 0-2 .9-2 2v12c0 1.100.9 2 2 2h16c1.100 0 2-.9 2-2V6c0-1.100-.9-2-2-2h-3.170L15 2H9zm3 15c-2.760 0-5-2.240-5-5s2.240-5 5-5 5 2.240 5 5-2.240 5-5 5z" fill=${t}/>`)],
  ["Zoom", fill24("M15.500 14h-.79l-.28-.27C15.410 12.590 16 11.110 16 9.500 16 5.910 13.090 3 9.500 3S3 5.910 3 9.500 5.910 16 9.500 16c1.610 0 3.090-.59 4.230-1.570l.27.28v.79l5 4.990L20.490 19l-4.990-5zm-6 0C7.010 14 5 11.990 5 9.500S7.010 5 9.500 5 14 7.010 14 9.500 11.990 14 9.500 14zM12 10h-2v2H9v-2H7V9h2V7h1v2h2v1z")],
  ["Back", icon(24, 24, svg`<path d="M18 5.500v13L6.500 12z" stroke=${t} stroke-width="1.600"/>`)],
  ["Home", icon(24, 24, svg`<circle cx="12" cy="12" r="6.500" stroke=${t} stroke-width="1.600"/>`)],
  ["Overview", icon(24, 24, svg`<rect x="5.500" y="5.500" width="13" height="13" rx="1" stroke=${t} stroke-width="1.600"/>`)],
  ["More", icon(24, 24, svg`<circle cx="6" cy="12" r="2" fill=${t}/><circle cx="12" cy="12" r="2" fill=${t}/><circle cx="18" cy="12" r="2" fill=${t}/>`)],
];

@customElement("emulator-tools")
class EmulatorTools extends LitElement {
  static styles = [base, css`
    :host { display: flex; flex-direction: column; background: #efefef; border: 1px solid #000; padding-bottom: 4px; }
    .head { height: 25px; display: flex; align-items: center; justify-content: space-between; padding: 3px 13px 0; }
    .tool { height: 44px; padding-right: 1px; }
  `];
  render() {
    return html`
      <div class="head">
        <button aria-label="Close">${icon(8, 8, svg`<path d="m.5.5 7 7M7.500.5l-7 7" stroke=${t} stroke-width="1.500"/>`)}</button>
        <button aria-label="Minimise">${icon(8, 8, svg`<path d="M0 4h8" stroke="#9fb0b8" stroke-width="1.800"/>`)}</button>
      </div>
      ${tools.map(([n, i]) => html`<button class="tool" aria-label=${n}>${i}</button>`)}`;
  }
}

/* ------------------------------------------------------------------ */
// each entry: shape, main colour, accent colour, running mark
const apps: [string, string, string, number][] = [
  ["sq", "#4aa8f0", "#e8f4ff", 1], ["ci", "#2b2540", "#b04bd0", 0], ["ci", "#8d949c", "#e0e4e8", 0], ["ci", "#2a9df4", "#e4483c", 1],
  ["ci", "#e8b82c", "#4285f4", 1], ["sq", "#7da8d8", "#3a5a88", 1], ["sq", "#9a6a38", "#805428", 0], ["sq", "#f4f4f4", "#d44", 0],
  ["sq", "#fbf6dc", "#f0d060", 1], ["sq", "#f4f4f4", "#ccc", 0], ["sq", "#f0f0e8", "#58a868", 0], ["ci", "#f0f0f0", "#e8643c", 0],
  ["ci", "#38a8f8", "#fff", 0], ["sq", "#3ccc54", "#fff", 0], ["sq", "#f4f4f4", "#e09838", 0], ["ba", "#48b848", "#f0a030", 0],
  ["sq", "#58b8e8", "#e8f0f8", 0], ["ci", "#f8f8f8", "#e858a8", 0], ["ci", "#f89828", "#fff", 0], ["ci", "#2898f8", "#fff", 0],
  ["ci", "#e05028", "#f89068", 1], ["sq", "#606468", "#a8acb0", 0], ["sq", "#282828", "#444", 1], ["ci", "#f0f4f8", "#2898d8", 1],
  ["sq", "#4088f8", "#fff", 1], ["sq", "#208850", "#fff", 1], ["sq", "#202828", "#38c8b8", 1], ["sq", "#a0b8d8", "#e8e8e8", 1],
  ["sq", "#283028", "#b8d838", 1], ["ri", "#48b838", "#48b838", 1], ["sq", "#2880c8", "#e8f4ff", 1], ["ci", "#703898", "#f4f0f8", 1],
  ["sq", "#2868c0", "#fff", 1], ["sq", "#989898", "#d0d0d0", 1], ["sq", "#a83838", "#d08080", 1], ["sq", "#484848", "#f89820", 1],
  ["ci", "#58b878", "#a0e0b0", 1], ["ba", "#8898a8", "#687888", 1], ["sq", "#e82820", "#fff", 1], ["ci", "#389848", "#205828", 1],
  ["sq", "#20b070", "#f4f4f4", 1], ["ci", "#28d080", "#404848", 1],
];
const darkThumbs = new Set([4, 14, 16, 21, 59, 63]);
const dotColors = ["#38a0e8", "#38a0e8", "#2868c0", "#38a0e8", "#e84838", "#38a0e8", "#38a0e8", "#58a868"];

@customElement("mac-dock")
class MacDock extends LitElement {
  static styles = [base, css`
    :host { display: block; background: #4b332c; padding: 0 3px; }
    .shelf { display: flex; justify-content: space-between; height: 19px; padding: 2px 4px 0 3px; border-radius: 4px 4px 0 0;
      background: linear-gradient(90deg, #8d7470, #b4685a 8%, #e07a58 20%, #d8845c 27%, #93705a 33%, #d88440 39%, #f08418 50%, #f29210 70%, #ee8a18 82%, #b8702c 89%, #d07c28 95%, #c87a30); }
    .slot { display: flex; flex-direction: column; align-items: center; gap: 3px; width: 9px; flex: none; }
    .mark { width: 3px; height: 3px; border-radius: 50%; background: #2a1210; }
    .split { width: 1px; background: #7a5a4a; flex: none; margin: 1px 4px; }
  `];
  private app([shape, c, a]: [string, string, string, number]) {
    if (shape === "ri") return svg`<circle cx="4.500" cy="5" r="3.600" stroke=${c} stroke-width="1.600"/>`;
    if (shape === "ba") return svg`<path d="M0 6h2v3H0zM6.500 4h2v5h-2z" fill=${a}/><path d="M3 1h2.500v8H3z" fill=${c}/>`;
    if (shape === "ci") return svg`<circle cx="4.500" cy="5" r="4.300" fill=${c}/><circle cx="5" cy="5" r="1.800" fill=${a}/>`;
    return svg`<rect x=".5" y="1" width="8" height="8" rx="1.500" fill=${c}/><rect x="2.500" y="3.500" width="4" height="3" fill=${a}/>`;
  }
  render() {
    return html`<div class="shelf">
      ${apps.map((a) => html`<span class="slot">${icon(9, 10, this.app(a))}${a[3] ? html`<span class="mark"></span>` : ""}</span>`)}
      <span class="split"></span>
      ${Array.from({ length: 83 }, (_, i) => html`<span class="slot">${icon(9, 10, svg`
        <rect x="0" y="2.500" width="8" height="6" fill=${darkThumbs.has(i) ? "#33302a" : "#f6f4f0"}/>
        ${i % 3 === 1 ? svg`<path d="M1.500 4.500h5M1.500 6.500h4" stroke="#c4c4c4" stroke-width=".8"/>` : ""}
        <circle cx="7.200" cy="8" r="1.300" fill=${dotColors[i % dotColors.length]}/>`)}</span>`)}
      <span class="slot">${icon(9, 10, svg`<path d="M1 1h7L7 9.500H2z" fill="#e4e0dc" stroke="#b8a898" stroke-width=".7"/><path d="M3 2v6M4.500 2v6M6 2v6" stroke="#a8a09a" stroke-width=".5"/>`)}</span>
    </div>`;
  }
}

/* ------------------------------------------------------------------ */
@customElement("app-root")
class AppRoot extends LitElement {
  static styles = css`
    :host { display: flex; flex-direction: column; height: 100vh; overflow: hidden; background: #6b7f96; }
    mac-menubar, mac-dock { flex: none; }
    .desk { flex: 1; min-height: 0; position: relative; }
    studio-window { position: absolute; inset: 0; }
    word-window { position: absolute; inset: 2px 0 16px 25px; }
    phone-frame { position: absolute; left: 513px; top: 135px; }
    emulator-tools { position: absolute; left: 867px; top: 135px; width: 61px; }
  `;
  render() {
    return html`
      <mac-menubar></mac-menubar>
      <div class="desk">
        <studio-window></studio-window>
        <word-window></word-window>
        <phone-frame></phone-frame>
        <emulator-tools></emulator-tools>
      </div>
      <mac-dock></mac-dock>`;
  }
}
